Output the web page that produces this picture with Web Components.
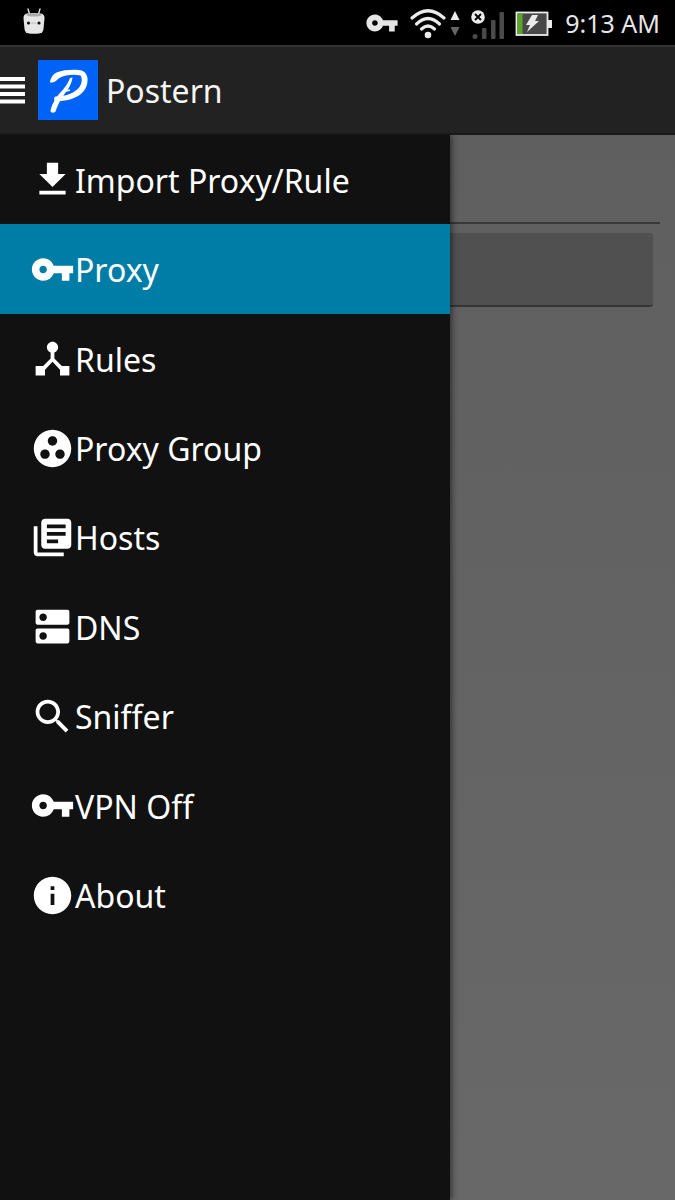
<!DOCTYPE html>
<html lang="en">
<head>
  <meta charset="UTF-8" />
  <meta name="viewport" content="width=device-width, initial-scale=1" />
  <title>Postern</title>
  <style>
    :root {
      --bar: #222222;
      --drawer: #111111;
      --active: #007da6;
      --text: #f5f5f5;
    }
    body {
      margin: 0;
      background: #000;
      color: var(--text);
      font-family: "Noto Sans", sans-serif;
    }
  </style>
</head>
<body>
  <postern-app>
    <status-bar slot="status" time="9:13 AM"></status-bar>
    <app-header slot="header" title-app="Postern"></app-header>
    <proxy-form slot="content"></proxy-form>
    <nav-drawer slot="drawer">
      <nav-item icon="download">Import Proxy/Rule</nav-item>
      <nav-item icon="key" active>Proxy</nav-item>
      <nav-item icon="hub">Rules</nav-item>
      <nav-item icon="group">Proxy Group</nav-item>
      <nav-item icon="library">Hosts</nav-item>
      <nav-item icon="dns">DNS</nav-item>
      <nav-item icon="search">Sniffer</nav-item>
      <nav-item icon="key">VPN Off</nav-item>
      <nav-item icon="info">About</nav-item>
    </nav-drawer>
  </postern-app>

  <script>
    // 24x24 icons
    const ICONS = {
      download: "M19 9h-4V3H9v6H5l7 7 7-7zM5 18v2h14v-2H5z",
      key: "M12.65 10C11.83 7.67 9.61 6 7 6c-3.31 0-6 2.69-6 6s2.69 6 6 6c2.61 0 4.83-1.67 5.65-4H17v4h4v-4h2v-4H12.65zM7 14c-1.1 0-2-.9-2-2s.9-2 2-2 2 .9 2 2-.9 2-2 2z",
      hub: "M17 16l-4-4V8.82C14.16 8.4 15 7.3 15 6c0-1.66-1.34-3-3-3S9 4.34 9 6c0 1.3.84 2.4 2 2.82V12l-4 4H3v5h5v-3.05l4-4.2 4 4.2V21h5v-5h-4z",
      group: "M12 2C6.48 2 2 6.48 2 12s4.48 10 10 10 10-4.48 10-10S17.52 2 12 2zM8 17.5c-1.38 0-2.5-1.12-2.5-2.5s1.12-2.5 2.5-2.5 2.5 1.12 2.5 2.5-1.12 2.5-2.5 2.5zM9.5 8c0-1.38 1.12-2.5 2.5-2.5s2.5 1.12 2.5 2.5-1.12 2.5-2.5 2.5S9.5 9.38 9.5 8zm6.5 9.5c-1.38 0-2.5-1.12-2.5-2.5s1.12-2.5 2.5-2.5 2.5 1.12 2.5 2.5-1.12 2.5-2.5 2.5z",
      library: "M4 6H2v14c0 1.1.9 2 2 2h14v-2H4V6zm16-4H8c-1.1 0-2 .9-2 2v12c0 1.1.9 2 2 2h12c1.1 0 2-.9 2-2V4c0-1.1-.9-2-2-2zm-1 9H9V9h10v2zm-4 4H9v-2h6v2zm4-8H9V5h10v2z",
      dns: "M20 13H4c-.55 0-1 .45-1 1v6c0 .55.45 1 1 1h16c.55 0 1-.45 1-1v-6c0-.55-.45-1-1-1zM7 19c-1.1 0-2-.9-2-2s.9-2 2-2 2 .9 2 2-.9 2-2 2zM20 3H4c-.55 0-1 .45-1 1v6c0 .55.45 1 1 1h16c.55 0 1-.45 1-1V4c0-.55-.45-1-1-1zM7 9c-1.1 0-2-.9-2-2s.9-2 2-2 2 .9 2 2-.9 2-2 2z",
      search: "M15.5 14h-.79l-.28-.27C15.41 12.59 16 11.11 16 9.5 16 5.91 13.09 3 9.5 3S3 5.91 3 9.5 5.91 16 9.5 16c1.61 0 3.09-.59 4.23-1.57l.27.28v.79l5 4.99L20.49 19l-4.99-5zm-6 0C7.01 14 5 11.99 5 9.5S7.01 5 9.5 5 14 7.01 14 9.5 11.99 14 9.5 14z",
      info: "M12 2C6.48 2 2 6.48 2 12s4.48 10 10 10 10-4.48 10-10S17.52 2 12 2zm1 15h-2v-6h2v6zm0-8h-2V7h2v2z",
    };

    class AppIcon extends HTMLElement {
      constructor() {
        super();
        this.attachShadow({ mode: "open" });
      }

      connectedCallback() {
        const name = this.getAttribute("name") || "";
        this.shadowRoot.innerHTML = `
        <style>
            :host {
              display: block;
              flex: none;
              width: 45px;
              height: 45px;
            }
            svg {
              display: block;
              width: 100%;
              height: 100%;
              fill: currentColor;
            }
        </style>
        <svg viewBox="0 0 24 24" aria-hidden="true"><path d="${ICONS[name]}"/></svg>`;
      }
    }

    class PosternApp extends HTMLElement {
      constructor() {
        super();
        this.attachShadow({ mode: "open" });
      }

      connectedCallback() {
        this.shadowRoot.innerHTML = `
        <style>
            :host {
              display: flex;
              flex-direction: column;
              min-height: 100vh;
            }
            main {
              position: relative;
              flex: 1;
              display: grid;
            }
        </style>
        <slot name="status"></slot>
        <slot name="header"></slot>
        <main>
          <slot name="content"></slot>
          <slot name="drawer"></slot>
        </main>`;
      }
    }

    class StatusBar extends HTMLElement {
      constructor() {
        super();
        this.attachShadow({ mode: "open" });
      }

      connectedCallback() {
        const time = this.getAttribute("time") || "";
        this.shadowRoot.innerHTML = `
        <style>
            :host {
              display: flex;
              align-items: center;
              justify-content: space-between;
              height: 45px;
              padding: 0 15px 0 22px;
              background: #000;
              color: #e6e6e6;
            }
            svg {
              display: block;
              flex: none;
            }
            .right {
              display: flex;
              align-items: center;
              gap: 10px;
            }
            app-icon {
              width: 34px;
              height: 34px;
            }
            time {
              margin-left: 2px;
              padding-top: 2px;
              font-size: 25px;
              line-height: 45px;
              white-space: nowrap;
            }
        </style>
        <svg width="24" height="45" viewBox="0 0 24 45" aria-hidden="true">
          <path d="M6 9l1.500 5M18 9l-1.500 5" stroke="#ddd" stroke-width="1.400" stroke-linecap="round"/>
          <path d="M1.500 18Q1.500 14 5 13.500Q12 12.500 19 13.500Q22.500 14 22.500 18L21.500 29Q21 33 17 33.500Q12 34 7 33.500Q3 33 2.500 29Z" fill="#e6e6e6"/>
          <path d="M4 14.500Q12 12 20 14.500Q19 16.500 12 16.500Q5 16.500 4 14.500Z" fill="#aaa"/>
          <circle cx="6.500" cy="23" r="1.600" fill="#111"/>
          <circle cx="17" cy="23" r="1.600" fill="#111"/>
          <path d="M9 23h5" stroke="#bbb"/>
        </svg>
        <div class="right">
          <app-icon name="key"></app-icon>
          <svg width="52" height="45" viewBox="0 0 52 45" aria-hidden="true">
            <g fill="none" stroke="#ebebeb" stroke-width="3.200" stroke-linecap="round">
              <path d="M3 18Q19 3.500 35 18"/>
              <path d="M7.500 24Q19 13 30.500 24"/>
              <path d="M12.500 29Q19 23 25.500 29"/>
            </g>
            <circle cx="19" cy="35" r="3.300" fill="#ebebeb"/>
            <path d="M46 11L50.500 20h-9z" fill="#ebebeb"/>
            <path d="M46 36L41.500 27h9z" fill="#666"/>
          </svg>
          <svg width="34" height="45" viewBox="0 0 34 45" aria-hidden="true">
            <g fill="#4a4a4a">
              <circle cx="4" cy="36.500" r="2.500"/>
              <rect x="11" y="28" width="4.500" height="11" rx="1"/>
              <rect x="20" y="20" width="4.500" height="19" rx="1"/>
              <rect x="28.500" y="12" width="4.500" height="27" rx="1"/>
            </g>
            <circle cx="7" cy="17" r="6.800" fill="#ebebeb"/>
            <path d="M4 14l6 6M10 14l-6 6" stroke="#000" stroke-width="1.800"/>
          </svg>
          <svg width="38" height="45" viewBox="0 0 38 45" aria-hidden="true">
            <rect x="1.500" y="12.500" width="31" height="22.500" fill="#484848" stroke="#ebebeb" stroke-width="1.800"/>
            <rect x="2.500" y="13.500" width="5" height="20.500" fill="#5ba528"/>
            <rect x="33" y="20" width="4" height="8" fill="#ebebeb"/>
            <path d="M17 15h6l-3 6h4L12 32l3-7h-4z" fill="#ebebeb"/>
          </svg>
          <time>${time}</time>
        </div>`;
      }
    }

    class AppHeader extends HTMLElement {
      constructor() {
        super();
        this.attachShadow({ mode: "open" });
      }

      connectedCallback() {
        const title = this.getAttribute("title-app") || "";
        this.shadowRoot.innerHTML = `
        <style>
            :host {
              display: flex;
              align-items: center;
              box-sizing: border-box;
              height: 90px;
              border-top: 2px solid #333;
              border-bottom: 2px solid #1a1a1a;
              background: var(--bar);
            }
            button {
              padding: 0;
              border: 0;
              background: none;
              color: #fff;
            }
            svg {
              display: block;
            }
            .logo {
              margin: 0 8px 0 13px;
            }
            h1 {
              margin: 0;
              padding-top: 2px;
              font-size: 32px;
              line-height: 48px;
              font-weight: 400;
            }
        </style>
        <button type="button" aria-label="Menu">
          <svg width="25" height="28" viewBox="0 0 25 28">
            <path d="M0 3h25M0 10.500h25M0 18h25M0 25.500h25" stroke="#fff" stroke-width="3.800"/>
          </svg>
        </button>
        <svg class="logo" width="60" height="60" viewBox="0 0 60 60" aria-hidden="true">
          <rect width="60" height="60" fill="#0063f8"/>
          <path d="M12 22.500C12.500 18 15 14 18.500 12.500C25 10 33 9.500 41 10C46 10.500 48.500 13 49.500 18C50 25 47.500 29.500 43.500 33.500C37 39 28 41 18 41.500C15.500 40 15.500 37.500 17.500 36.500C29 36.500 37 32.500 41.500 27C44 23 44.500 18.500 42.500 15.500C35 14 27 15 21.500 18C19 19.500 17.500 23 12 22.500Z" fill="#fff"/>
          <path d="M32 18L34.500 17.500C34 23 30 30 26.500 34C23 39 19.500 45 17.500 51.500Q15 54 12.500 51.500C13 46 17 39 21 34C27 28 30 23 32 18Z" fill="#fff"/>
          <path d="M26 31.500l6-1.500" stroke="#fff" stroke-width="1.500"/>
        </svg>
        <h1>${title}</h1>`;
      }
    }

    class NavDrawer extends HTMLElement {
      constructor() {
        super();
        this.attachShadow({ mode: "open" });
      }

      connectedCallback() {
        this.shadowRoot.innerHTML = `
        <style>
            :host {
              position: absolute;
              inset: 0 auto 0 0;
              width: 66.6667%;
              background: var(--drawer);
              box-shadow: 2px 0 6px rgba(0, 0, 0, 0.5);
              clip-path: inset(0 -12px 0 0);
            }
            nav {
              display: grid;
              grid-auto-rows: 1fr;
              height: 805px;
            }
        </style>
        <nav>
          <slot></slot>
        </nav>`;
      }
    }

    class NavItem extends HTMLElement {
      constructor() {
        super();
        this.attachShadow({ mode: "open" });
      }

      connectedCallback() {
        const icon = this.getAttribute("icon") || "";
        this.shadowRoot.innerHTML = `
        <style>
            :host {
              display: grid;
            }
            :host([active]) {
              background: var(--active);
            }
            a {
              display: flex;
              align-items: center;
              padding: 0 30px;
              color: #fff;
              font-size: 32px;
              line-height: 48px;
              text-decoration: none;
              white-space: nowrap;
            }
            span {
              padding-top: 2px;
            }
        </style>
        <a href="#">
          <app-icon name="${icon}"></app-icon>
          <span><slot></slot></span>
        </a>`;
      }
    }

    class ProxyForm extends HTMLElement {
      constructor() {
        super();
        this.attachShadow({ mode: "open" });
      }

      connectedCallback() {
        this.shadowRoot.innerHTML = `
        <style>
            :host {
              display: block;
              background: linear-gradient(#5f5f5f, #686868);
            }
            form {
              display: flex;
              flex-direction: column;
              gap: 9px;
              padding: 15px;
            }
            input {
              height: 74px;
              box-sizing: border-box;
              padding: 0;
              border: 0;
              border-bottom: 2px solid #383838;
              background: none;
              color: inherit;
              font: inherit;
            }
            button {
              height: 74px;
              margin: 0 7px;
              border: 0;
              border-bottom: 2px solid #363636;
              border-radius: 3px;
              background: #505050;
            }
        </style>
        <form>
          <input type="text" aria-label="Proxy" />
          <button type="button" aria-label="Add proxy"></button>
        </form>`;
      }
    }

    // Register the components
    customElements.define("app-icon", AppIcon);
    customElements.define("postern-app", PosternApp);
    customElements.define("status-bar", StatusBar);
    customElements.define("app-header", AppHeader);
    customElements.define("nav-drawer", NavDrawer);
    customElements.define("nav-item", NavItem);
    customElements.define("proxy-form", ProxyForm);
  </script>
</body>
</html>
